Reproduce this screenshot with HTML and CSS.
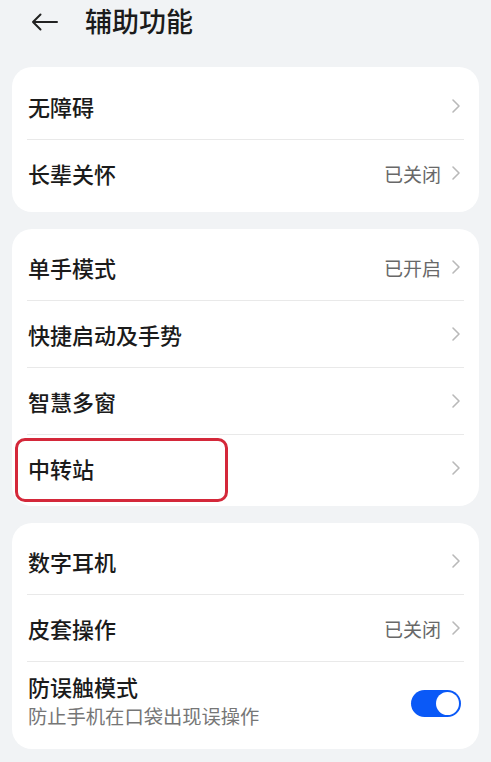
FILE: index.html
```html
<!DOCTYPE html>
<html lang="zh-CN">
<head>
    <meta charset="UTF-8">
    <meta name="viewport" content="width=device-width, initial-scale=1.0">
    <title>辅助功能</title>
    <link rel="stylesheet" href="styles.css">
</head>
<body>

    <header class="topbar">
        <svg class="back" width="27" height="18" viewBox="0 0 27 18">
            <path d="M26 9 H2 M9.5 1.5 L2 9 L9.5 16.5" fill="none" stroke="#222" stroke-width="2" stroke-linecap="round" stroke-linejoin="round"/>
        </svg>
        <h1>辅助功能</h1>
    </header>

    <section class="card">
        <div class="row">
            <span class="label">无障碍</span>
            <span class="right"><svg class="chev" viewBox="0 0 10 16"><path d="M2 2 L8 8 L2 14"/></svg></span>
        </div>
        <div class="row">
            <span class="label">长辈关怀</span>
            <span class="right"><span class="value">已关闭</span><svg class="chev" viewBox="0 0 10 16"><path d="M2 2 L8 8 L2 14"/></svg></span>
        </div>
    </section>

    <section class="card">
        <div class="row">
            <span class="label">单手模式</span>
            <span class="right"><span class="value">已开启</span><svg class="chev" viewBox="0 0 10 16"><path d="M2 2 L8 8 L2 14"/></svg></span>
        </div>
        <div class="row">
            <span class="label">快捷启动及手势</span>
            <span class="right"><svg class="chev" viewBox="0 0 10 16"><path d="M2 2 L8 8 L2 14"/></svg></span>
        </div>
        <div class="row">
            <span class="label">智慧多窗</span>
            <span class="right"><svg class="chev" viewBox="0 0 10 16"><path d="M2 2 L8 8 L2 14"/></svg></span>
        </div>
        <div class="row">
            <span class="label">中转站</span>
            <span class="right"><svg class="chev" viewBox="0 0 10 16"><path d="M2 2 L8 8 L2 14"/></svg></span>
            <span class="mark"></span>
        </div>
    </section>

    <section class="card">
        <div class="row">
            <span class="label">数字耳机</span>
            <span class="right"><svg class="chev" viewBox="0 0 10 16"><path d="M2 2 L8 8 L2 14"/></svg></span>
        </div>
        <div class="row">
            <span class="label">皮套操作</span>
            <span class="right"><span class="value">已关闭</span><svg class="chev" viewBox="0 0 10 16"><path d="M2 2 L8 8 L2 14"/></svg></span>
        </div>
        <div class="row tall">
            <div class="texts">
                <span class="label">防误触模式</span>
                <span class="sub">防止手机在口袋出现误操作</span>
            </div>
            <span class="toggle on"><span class="knob"></span></span>
        </div>
    </section>

</body>
</html>
```

FILE: styles.css
```css
body {
    margin: 0;
    background-color: #f1f3f5;
    font-family: "Noto Sans CJK SC", "Noto Sans", sans-serif;
    color: #1b1b1b;
}
.topbar {
    display: flex;
    align-items: center;
    height: 40px;
    padding-left: 31px;
    margin-bottom: 27px;
}
.back {
    margin-top: 3px;
}
.topbar h1 {
    margin: 0 0 0 27px;
    font-size: 27px;
    font-weight: 500;
    line-height: 1;
}
.card {
    margin: 0 12px 17px;
    padding: 5px 15px;
    background-color: #fff;
    border-radius: 20px;
}
.card:first-of-type {
    padding: 6px 15px;
}
.row {
    position: relative;
    display: flex;
    align-items: center;
    justify-content: space-between;
    height: 66px;
    padding: 0 3px 0 1px;
    border-bottom: 1px solid #e9e9e9;
}
.row:last-child {
    border-bottom: none;
}
.row.tall {
    height: 82px;
}
.label {
    font-size: 22px;
    font-weight: 500;
    line-height: 1;
}
.right {
    display: flex;
    align-items: center;
}
.value {
    font-size: 19px;
    color: #686868;
    margin-right: 10px;
}
.chev {
    width: 10px;
    height: 16px;
    fill: none;
    stroke: #b9b9b9;
    stroke-width: 1.6;
    stroke-linecap: round;
    stroke-linejoin: round;
}
.texts {
    display: flex;
    flex-direction: column;
    gap: 10px;
    margin-top: -4px;
}
.sub {
    font-size: 19.3px;
    color: #767676;
    line-height: 1;
}
.toggle {
    width: 50px;
    height: 27px;
    border-radius: 14px;
    background-color: #0a59f7;
    display: flex;
    align-items: center;
    justify-content: flex-end;
    box-sizing: border-box;
    padding: 2px;
}
.knob {
    width: 23px;
    height: 23px;
    border-radius: 50%;
    background-color: #fff;
}
.mark {
    position: absolute;
    left: -12px;
    top: 3px;
    width: 213px;
    height: 64px;
    box-sizing: border-box;
    border: 3px solid #d4283a;
    border-radius: 10px;
}
```
